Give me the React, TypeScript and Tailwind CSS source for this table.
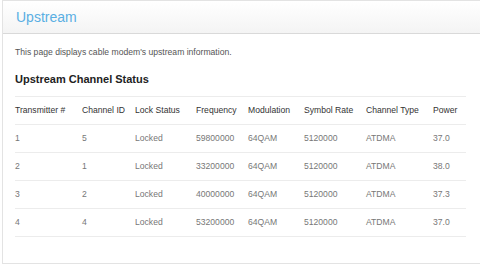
const headers = [
  "Transmitter #",
  "Channel ID",
  "Lock Status",
  "Frequency",
  "Modulation",
  "Symbol Rate",
  "Channel Type",
  "Power",
]

const rows = [
  ["1", "5", "Locked", "59800000", "64QAM", "5120000", "ATDMA", "37.0"],
  ["2", "1", "Locked", "33200000", "64QAM", "5120000", "ATDMA", "38.0"],
  ["3", "2", "Locked", "40000000", "64QAM", "5120000", "ATDMA", "37.3"],
  ["4", "4", "Locked", "53200000", "64QAM", "5120000", "ATDMA", "37.0"],
]

// colonnes mesurées sur la capture
const cols = "grid grid-cols-[67px_53px_61px_52px_56px_62px_67px_1fr]"

export default function App() {
  return (
    <div className="h-[265px] w-[480px] overflow-hidden bg-white font-['Liberation_Sans',Arial,sans-serif]">
      <div className="ml-[2px] h-[264px] border border-r-0 border-[#e3e3e3] bg-white">
        <div className="flex h-[33px] items-center border-b border-[#d9d9d9] bg-gradient-to-b from-white to-[#f4f4f4] pl-[13px]">
          <h1 className="text-[14px] leading-none text-[#5aafe3]">Upstream</h1>
        </div>
        <div className="pl-[12px] pr-[12px]">
          <p className="mt-[12px] text-[8.6px] leading-[13px] text-[#555]">
            This page displays cable modem's upstream information.
          </p>
          <h2 className="mt-[12px] text-[11px] font-bold leading-[16px] text-[#222]">
            Upstream Channel Status
          </h2>
          <div className="mt-[9px] w-[451px] border-t border-[#ececec] text-[8.6px]">
            <div className={`${cols} h-[28px] items-center border-b border-[#ececec] text-[#333]`}>
              {headers.map((h) => (
                <div key={h}>{h}</div>
              ))}
            </div>
            {rows.map((r, i) => (
              <div
                key={i}
                className={`${cols} h-[28px] items-center border-b border-[#ececec] text-[#777]`}
              >
                {r.map((c, j) => (
                  <div key={j}>{c}</div>
                ))}
              </div>
            ))}
          </div>
        </div>
      </div>
    </div>
  )
}
